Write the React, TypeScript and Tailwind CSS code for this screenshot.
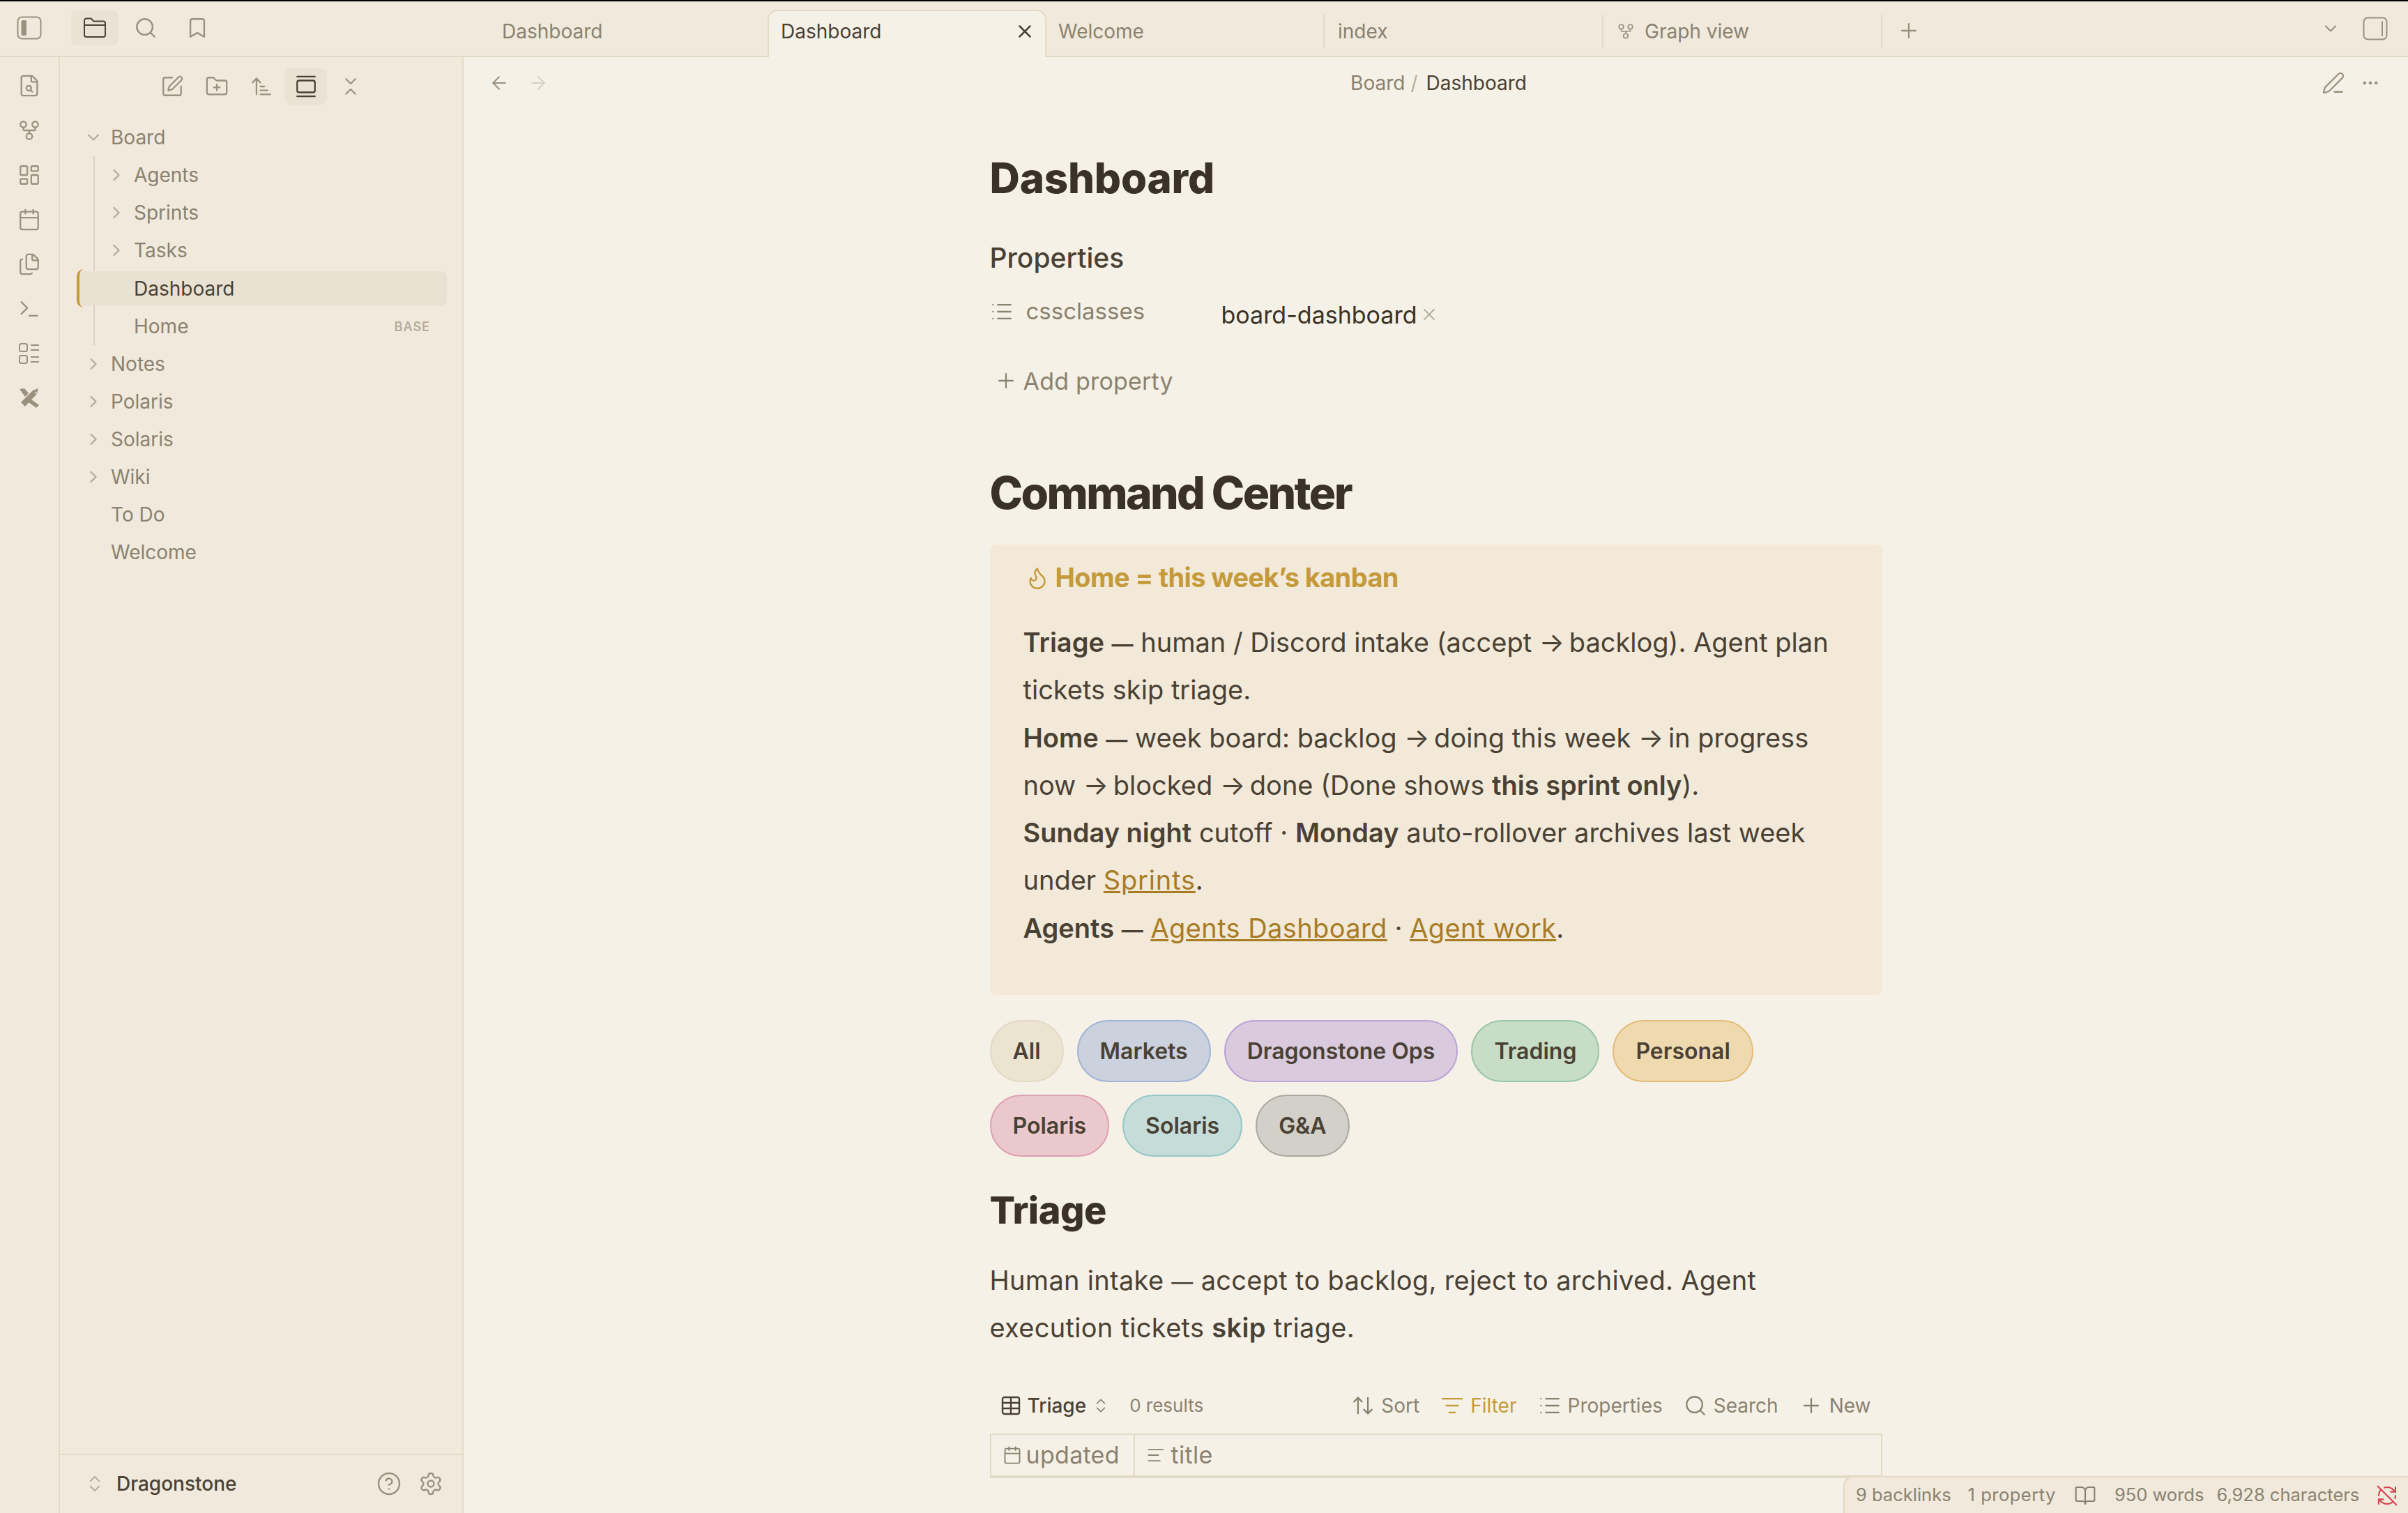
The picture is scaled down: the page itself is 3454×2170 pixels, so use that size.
import React from "react";
import {
  Search, Bookmark, FileSearch, GitFork, LayoutDashboard, Calendar, Files, Terminal,
  SquarePen, FolderPlus, ArrowUpNarrowWide, GalleryVertical, ChevronsDownUp, ChevronDown, ChevronRight,
  ChevronsUpDown, CircleHelp, Settings, X, Plus, ArrowLeft, ArrowRight, PenLine, MoreHorizontal,
  List, Flame, Table, ArrowUpDown, ListFilter, AlignLeft, BookOpen, RefreshCwOff,
} from "lucide-react";

const Ic = ({ I, s = 32, w = 1.6, c = "text-[#9a917f]" }: any) => <I size={s} strokeWidth={w} className={`${c} shrink-0`} />;

const PanelL = () => (
  <svg width="36" height="34" viewBox="0 0 36 34" fill="none" className="shrink-0">
    <rect x="1.5" y="1.5" width="33" height="31" rx="6" stroke="#9a917f" strokeWidth="2" />
    <rect x="6.5" y="6" width="7.5" height="22" rx="2.5" fill="#9a917f" />
  </svg>
);
const PanelR = () => (
  <svg width="36" height="34" viewBox="0 0 36 34" fill="none" className="shrink-0">
    <rect x="1.5" y="1.5" width="33" height="31" rx="6" stroke="#9a917f" strokeWidth="2" />
    <rect x="27" y="6" width="2" height="22" rx="1" fill="#9a917f" />
  </svg>
);
const FolderClosed = () => (
  <svg width="34" height="30" viewBox="0 0 34 30" fill="none" stroke="#4a4135" strokeWidth="2" strokeLinejoin="round" className="shrink-0">
    <path d="M2 4.5a3 3 0 0 1 3-3h6.5l4 4H29a3 3 0 0 1 3 3V25a3 3 0 0 1-3 3H5a3 3 0 0 1-3-3Z" />
    <path d="M2 11h30" />
  </svg>
);
const TodoList = () => (
  <svg width="30" height="30" viewBox="0 0 30 30" fill="none" stroke="#9a917f" strokeWidth="2" className="shrink-0">
    <rect x="1" y="1" width="11" height="11" rx="2.5" />
    <rect x="1" y="18" width="11" height="11" rx="2.5" />
    <path d="M17 3h12M17 10h12M17 20h12M17 27h12" />
  </svg>
);
const Tools = () => (
  <svg width="30" height="30" viewBox="0 0 30 30" fill="none" className="shrink-0">
    <path d="M28 1 26 9 9 27 3 21 20 4Z" fill="#9a917f" />
    <path d="M1 2 8 1 14 8 9 13Z" fill="#9a917f" />
    <path d="M18 17 29 25 25 29 14 21Z" fill="#9a917f" />
    <path d="M23 6 26 9" stroke="#f0e9dc" strokeWidth="1.2" />
  </svg>
);

const Row = ({ label, indent = 0, chev, open, badge }: any) => (
  <div className="h-[54px] flex items-center shrink-0 rounded-[8px] mr-[22px]">
    <div className={indent ? "w-[106px] shrink-0 flex justify-end pr-[11px]" : "w-[73px] shrink-0 flex justify-end pr-[11px]"}>
      {chev && <Ic I={open ? ChevronDown : ChevronRight} s={28} w={2} c="text-[#b5ad9b]" />}
    </div>
    <span className="text-[28px] text-[#8a8270]">{label}</span>
    {badge && <span className="ml-auto mr-[24px] text-[18px] font-semibold tracking-[1px] text-[#b5ad9b]">{badge}</span>}
  </div>
);

const Tab = ({ label, icon }: any) => (
  <div className="w-[400px] h-[48px] flex items-center gap-[14px] pl-[19px] border-r-2 border-[#e3dac6] text-[28px] text-[#8a8270]">
    {icon}
    {label}
  </div>
);

const Pill = ({ t, c }: any) => (
  <div className={`h-[89px] px-[31px] flex items-center rounded-full border-2 text-[32px] font-semibold text-[#4a4135] ${c}`}>{t}</div>
);

const Tool = ({ I, t, c = "text-[#8a8270]" }: any) => (
  <div className={`flex items-center gap-[9px] text-[28px] ${c}`}>
    <I size={34} strokeWidth={1.6} />
    {t}
  </div>
);

const Dash = () => <span className="text-[31px] leading-none">—</span>;
const BDash = () => <span className="text-[31px] leading-none font-semibold">—</span>;
const Arr = () => <span className="tracking-[-4px]">→</span>;
const Lnk = ({ children, t = "tracking-[0.4px]" }: any) => <span className={`text-[#a87b25] underline ${t}`}>{children}</span>;

export default function App() {
  return (
    <div className="w-[3454px] h-[2170px] overflow-hidden relative flex flex-col bg-[#f6f1e6] [font-family:Inter,sans-serif] text-[#4a4135]">
      <div className="h-[2px] bg-black shrink-0" />
      {/* Title bar */}
      <div className="h-[80px] shrink-0 flex bg-[#f0e9dc] border-b-2 border-[#e3dac6] relative">
        <div className="w-[719px] shrink-0 flex items-center">
          <div className="w-[84px] flex justify-center -mt-[2px]"><PanelL /></div>
          <div className="ml-[18px] w-[68px] h-[50px] -mt-[3px] rounded-[8px] bg-[#eae3d4] flex items-center justify-center"><FolderClosed /></div>
          <div className="ml-[22px] -mt-[3px]"><Ic I={Search} s={34} w={1.7} /></div>
          <div className="ml-[40px] -mt-[3px]"><Ic I={Bookmark} s={34} w={1.7} /></div>
        </div>
        <div className="flex items-center">
          <div className="w-[382px] mt-[8px] text-[28px] text-[#8a8270] pl-[1px]">Dashboard</div>
          <div className="w-[400px] h-[68px] self-end -mb-[2px] bg-[#f6f1e6] border-2 border-b-0 border-[#e3dac6] rounded-t-[14px] flex items-center justify-between pl-[17px] pr-[14px] pb-[8px] text-[28px] text-[#4a4135] z-10">
            Dashboard
            <Ic I={X} s={30} w={2} c="text-[#4a4135]" />
          </div>
          <div className="flex items-center mt-[8px]">
            <div className="w-[399px] h-[48px] flex items-center pl-[17px] border-r-2 border-[#e3dac6] text-[28px] text-[#8a8270]">Welcome</div>
            <Tab label="index" />
            <Tab label="Graph view" icon={<Ic I={GitFork} s={26} />} />
            <div className="ml-[21px] -mt-[2px]"><Ic I={Plus} s={34} w={1.6} /></div>
          </div>
        </div>
        <div className="ml-auto flex items-center pr-[29px]">
          <Ic I={ChevronDown} s={28} w={1.8} />
          <div className="ml-[32px]"><PanelR /></div>
        </div>
      </div>

      <div className="flex-1 flex min-h-0">
        {/* Ribbon */}
        <div className="w-[86px] shrink-0 bg-[#f0e9dc] border-r-2 border-[#e3dac6] flex flex-col items-center pt-[24px] gap-[30px]">
          <div className="h-[34px] flex items-center"><Ic I={FileSearch} s={34} /></div>
          <div className="h-[34px] flex items-center"><Ic I={GitFork} s={34} /></div>
          <div className="h-[34px] flex items-center"><Ic I={LayoutDashboard} s={34} /></div>
          <div className="h-[34px] flex items-center"><Ic I={Calendar} s={34} /></div>
          <div className="h-[34px] flex items-center"><Ic I={Files} s={34} /></div>
          <div className="h-[34px] flex items-center"><Ic I={Terminal} s={34} /></div>
          <div className="h-[34px] flex items-center"><TodoList /></div>
          <div className="h-[34px] flex items-center"><Tools /></div>
        </div>
        {/* Sidebar */}
        <div className="w-[579px] shrink-0 bg-[#f0e9dc] border-r-2 border-[#e3dac6] flex flex-col">
          <div className="h-[52px] mt-[16px] flex items-center justify-center gap-[30px] pr-[1px] shrink-0">
            <Ic I={SquarePen} s={34} />
            <Ic I={FolderPlus} s={34} />
            <Ic I={ArrowUpNarrowWide} s={34} />
            <div className="w-[60px] h-[52px] rounded-[8px] bg-[#eae3d4] flex items-center justify-center -mx-[13px]"><Ic I={GalleryVertical} s={34} c="text-[#4a4135]" /></div>
            <div className="ml-[1px]"><Ic I={ChevronsDownUp} s={32} /></div>
          </div>
          <div className="mt-[20px] flex flex-col relative flex-1">
            <Row label="Board" chev open />
            <div className="relative flex flex-col">
              <div className="absolute left-[48px] top-0 bottom-0 w-[2px] bg-[#dcd4c3]" />
              <Row label="Agents" indent chev />
              <Row label="Sprints" indent chev />
              <Row label="Tasks" indent chev />
              <div className="relative ml-[24px]">
                <div className="absolute left-0 top-0 bottom-0 w-[10px] border-l-[4px] border-[#c49a3a] rounded-l-[10px]" />
                <div className="-ml-[24px] pl-[24px]">
                  <div className="h-[49px] my-[3px] flex items-center rounded-[8px] mr-[22px] bg-[#e9e2d3] pl-[82px] text-[28px] text-[#4a4135]">Dashboard</div>
                </div>
              </div>
              <Row label="Home" indent badge="BASE" />
            </div>
            <Row label="Notes" chev />
            <Row label="Polaris" chev />
            <Row label="Solaris" chev />
            <Row label="Wiki" chev />
            <Row label="To Do" />
            <Row label="Welcome" />
          </div>
          <div className="h-[85px] shrink-0 border-t-2 border-[#e3dac6] flex items-center pr-[27px] pb-[2px]">
            <div className="w-[81px] flex justify-end pr-[16px]"><Ic I={ChevronsUpDown} s={30} c="text-[#b5ad9b]" /></div>
            <span className="text-[28px] font-medium text-[#4a4135]">Dragonstone</span>
            <div className="ml-auto flex items-center gap-[24px]">
              <Ic I={CircleHelp} s={36} w={1.6} />
              <Ic I={Settings} s={36} w={1.6} />
            </div>
          </div>
        </div>
        {/* Main */}
        <div className="flex-1 flex flex-col min-w-0 overflow-hidden">
          <div className="h-[74px] shrink-0 flex items-center pl-[36px] pr-[40px] relative">
            <Ic I={ArrowLeft} s={30} />
            <div className="ml-[26px]"><Ic I={ArrowRight} s={30} c="text-[#d8d1c2]" /></div>
            <div className="flex-1 flex justify-center items-center gap-[8px] text-[28px] pl-[10px]">
              <span className="text-[#8a8270]">Board</span>
              <span className="text-[#b5ad9b]">/</span>
              <span className="text-[#4a4135] ml-[4px]">Dashboard</span>
            </div>
            <Ic I={PenLine} s={34} />
            <div className="ml-[22px]"><Ic I={MoreHorizontal} s={28} w={2} /></div>
          </div>

          <div className="w-[1280px] mx-auto shrink-0 pt-[63px]">
            <h1 className="h-[72px] flex items-center text-[60px] font-extrabold tracking-[-0.2px] text-[#3a3226]">Dashboard</h1>
            <div className="h-[44px] mt-[57px] flex items-center text-[39px] font-medium">Properties</div>
            <div className="h-[60px] mt-[28px] flex items-center">
              <div className="w-[332px] flex items-center gap-[18px] text-[33px] text-[#8a8270] -mt-[6px]">
                <Ic I={List} s={34} c="text-[#8a8270]" />
                cssclasses
              </div>
              <span className="text-[34px] text-[#3a3226] mt-[2px]">board-dashboard</span>
              <div className="ml-[4px] mt-[2px]"><Ic I={X} s={28} c="text-[#b5ad9b]" /></div>
            </div>
            <div className="h-[60px] mt-[36px] flex items-center gap-[8px] pl-[6px] text-[34px] tracking-[0.2px] text-[#8a8270]">
              <Ic I={Plus} s={34} c="text-[#8a8270]" />
              Add property
            </div>
            <h2 className="h-[78px] mt-[92px] flex items-center text-[64px] font-extrabold tracking-[-2.6px] text-[#3a3226]">Command Center</h2>

            <div className="mt-[35px] h-[646px] rounded-[8px] bg-[#f2e9d8] pl-[48px] pt-[23px]">
              <div className="h-[48px] flex items-center gap-[8px] text-[38px] font-bold tracking-[-0.6px] text-[#c49a3a]">
                <Ic I={Flame} s={36} w={1.6} c="text-[#c49a3a] ml-[2px] mt-[2px]" />
                Home = this week’s kanban
              </div>
              <div className="mt-[35px] text-[38px] leading-[68.3px] whitespace-nowrap">
                <b className="font-semibold">Triage</b> <BDash /> human / Discord intake (accept <Arr /> backlog). Agent plan<br />
                tickets skip triage.<br />
                <b className="font-semibold">Home</b> <BDash /> week board: backlog <Arr /> doing this week <Arr /> in progress<br />
                now <Arr /> blocked <Arr /> done (Done shows <b className="font-semibold">this sprint only</b>).<br />
                <b className="font-semibold">Sunday night</b> cutoff · <b className="font-semibold">Monday</b> auto-rollover archives last week<br />
                under <Lnk t="tracking-[0.8px]">Sprints</Lnk>.<br />
                <b className="font-semibold">Agents</b> <BDash /> <Lnk>Agents Dashboard</Lnk> · <Lnk>Agent work</Lnk>.
              </div>
            </div>

            <div className="mt-[36px] flex flex-col gap-[18px]">
              <div className="flex gap-[19px]">
                <Pill t="All" c="bg-[#ebe4d1] border-[#e3dac6]" />
                <Pill t="Markets" c="bg-[#cbd2de] border-[#a0b4d6]" />
                <Pill t="Dragonstone Ops" c="bg-[#d9cbdd] border-[#b9a3d8]" />
                <Pill t="Trading" c="bg-[#c8ddc6] border-[#97c6a6]" />
                <Pill t="Personal" c="bg-[#efdab0] border-[#e3bc78]" />
              </div>
              <div className="flex gap-[19px]">
                <Pill t="Polaris" c="bg-[#ebc8cc] border-[#dd9fb3]" />
                <Pill t="Solaris" c="bg-[#c5dcd8] border-[#94c7c8]" />
                <Pill t="G&A" c="bg-[#d3d0c9] border-[#aaa8a2]" />
              </div>
            </div>

            <h3 className="h-[70px] mt-[41px] flex items-center text-[54px] font-extrabold tracking-[-0.5px] text-[#3a3226]">Triage</h3>
            <p className="mt-[32px] text-[38px] leading-[68.3px] tracking-[0.3px] whitespace-nowrap">
              Human intake <Dash /> accept to backlog, reject to archived. Agent<br />
              execution tickets <b className="font-semibold">skip</b> triage.
            </p>

            <div className="h-[60px] mt-[47px] flex items-center pl-[14px] pr-[16px]">
              <Ic I={Table} s={32} w={1.8} c="text-[#4a4135]" />
              <span className="ml-[8px] text-[28px] font-medium text-[#4a4135]">Triage</span>
              <div className="ml-[8px]"><Ic I={ChevronsUpDown} s={26} c="text-[#8a8270]" /></div>
              <span className="ml-[28px] text-[26px] text-[#8a8270]">0 results</span>
              <div className="ml-auto flex items-center gap-[30px]">
                <Tool I={ArrowUpDown} t="Sort" />
                <Tool I={ListFilter} t="Filter" c="text-[#c49a3a]" />
                <Tool I={List} t="Properties" />
                <Tool I={Search} t="Search" />
                <Tool I={Plus} t="New" />
              </div>
            </div>
            <div className="mt-[10px] h-[64px] border-2 border-b-[4px] border-[#e3dac6] flex items-stretch">
              <div className="w-[206px] border-r-2 border-[#e3dac6] flex items-center gap-[6px] pl-[16px] text-[34px] tracking-[0.3px] text-[#8a8270]">
                <Ic I={Calendar} s={28} c="text-[#8a8270]" />
                updated
              </div>
              <div className="flex items-center gap-[8px] pl-[16px] text-[34px] tracking-[0.3px] text-[#8a8270]">
                <Ic I={AlignLeft} s={28} c="text-[#8a8270]" />
                title
              </div>
            </div>
          </div>
        </div>
      </div>

      {/* Status bar */}
      <div className="absolute right-0 bottom-0 w-[810px] h-[53px] bg-[#f0e9dc] border-l-2 border-t-2 border-[#e3dac6] rounded-tl-[14px] flex items-center pl-[16px] text-[25.5px] text-[#8a8270] whitespace-nowrap">
        <span>9 backlinks</span>
        <span className="ml-[24px] tracking-[0.5px]">1 property</span>
        <div className="ml-[26px]"><Ic I={BookOpen} s={32} c="text-[#8a8270]" /></div>
        <span className="ml-[26px]">950 words</span>
        <span className="ml-[18px]">6,928 characters</span>
        <div className="ml-[24px]"><Ic I={RefreshCwOff} s={32} c="text-[#d9434f]" /></div>
      </div>
    </div>
  );
}
